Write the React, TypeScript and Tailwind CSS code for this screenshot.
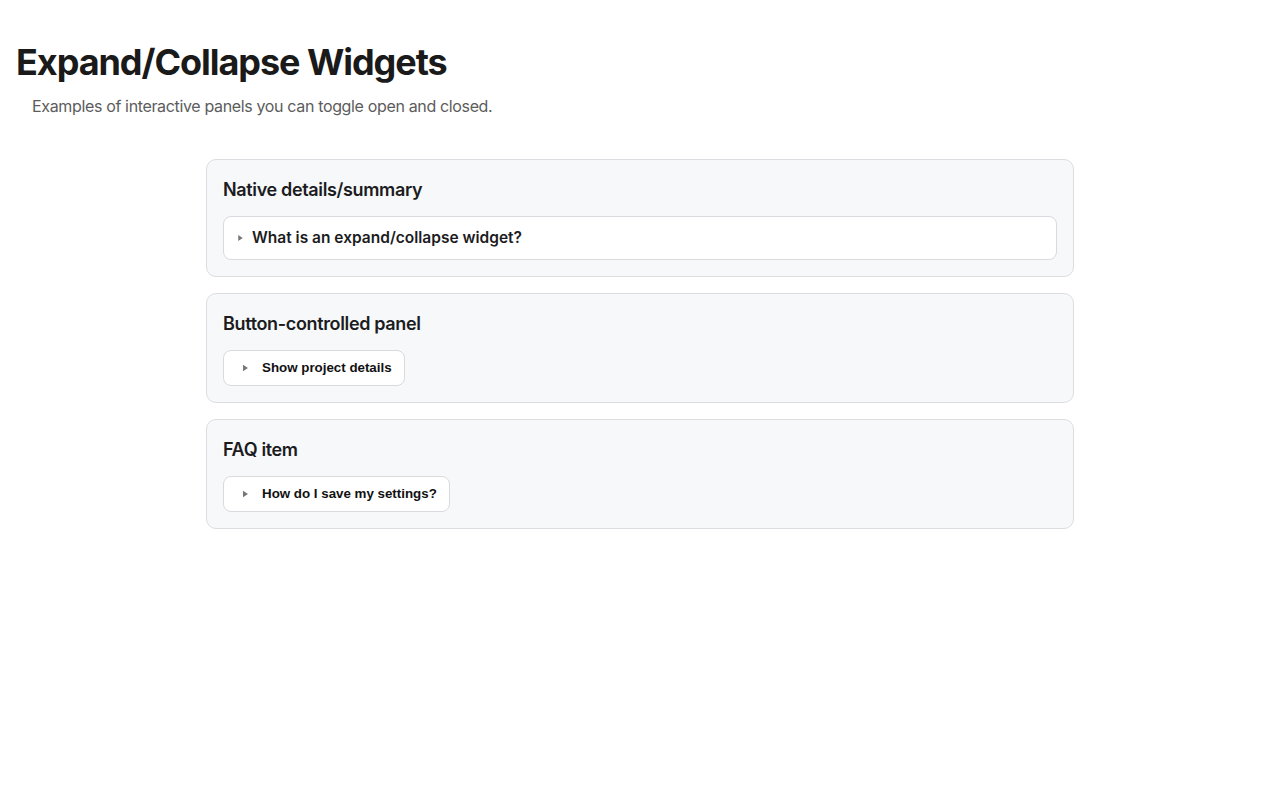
import { useState } from "react";

function Caret({ open, className }: { open?: boolean; className?: string }) {
  return (
    <svg
      viewBox="0 0 6 8"
      className={className}
      style={{ transform: open ? "rotate(90deg)" : undefined }}
      aria-hidden="true"
    >
      <path d="M0 0 L6 4 L0 8 Z" fill="currentColor" />
    </svg>
  );
}

function Card({ title, children }: { title: string; children: React.ReactNode }) {
  return (
    <section className="rounded-[10px] border border-[#dcdde1] bg-[#f7f8fa] p-4">
      <h2 className="mb-3 text-[18px] leading-7 font-semibold tracking-[-0.35px] text-[#1c1c1e]">
        {title}
      </h2>
      {children}
    </section>
  );
}

function ToggleButton({ label, body }: { label: string; body: string }) {
  const [open, setOpen] = useState(false);
  return (
    <div>
      <button
        onClick={() => setOpen((o) => !o)}
        aria-expanded={open}
        className="flex h-9 items-center gap-[14px] rounded-lg border border-[#d9dadd] bg-white pr-[12px] pl-[19px] font-['Liberation_Sans',Arial,sans-serif] text-[13.33px] font-bold text-[#111]"
      >
        <Caret open={open} className="h-[8px] w-[5px] text-[#777]" />
        {label}
      </button>
      {open && <p className="mt-3 text-[15px] text-[#444]">{body}</p>}
    </div>
  );
}

export default function App() {
  return (
    <div className="min-h-screen bg-white p-4 font-['Inter','Noto_Sans',sans-serif] text-[#1a1a1a]">
      <h1 className="mt-[26px] text-[36px] leading-10 font-bold tracking-[-1.05px] text-[#1a1a1a]">
        Expand/Collapse Widgets
      </h1>
      <p className="mt-3 ml-4 text-base leading-6 tracking-[-0.35px] text-[#5c5c5c]">
        Examples of interactive panels you can toggle open and closed.
      </p>

      <div className="mx-auto mt-[41px] flex w-[868px] flex-col gap-4">
        <Card title="Native details/summary">
          <details className="group rounded-lg border border-[#d9dadd] bg-white">
            <summary className="flex h-[42px] cursor-pointer list-none items-center gap-[9px] pl-[14px] text-[15.5px] font-semibold text-[#1c1c1e] [&::-webkit-details-marker]:hidden">
              <Caret className="h-[6px] w-[5px] text-[#777] group-open:rotate-90" />
              What is an expand/collapse widget?
            </summary>
            <p className="px-[14px] pb-3 text-[15px] text-[#444]">
              A control that shows or hides a region of content when activated.
            </p>
          </details>
        </Card>

        <Card title="Button-controlled panel">
          <ToggleButton
            label="Show project details"
            body="Project: Widgets demo. Status: in progress."
          />
        </Card>

        <Card title="FAQ item">
          <ToggleButton
            label="How do I save my settings?"
            body="Settings are saved automatically whenever you make a change."
          />
        </Card>
      </div>
    </div>
  );
}
